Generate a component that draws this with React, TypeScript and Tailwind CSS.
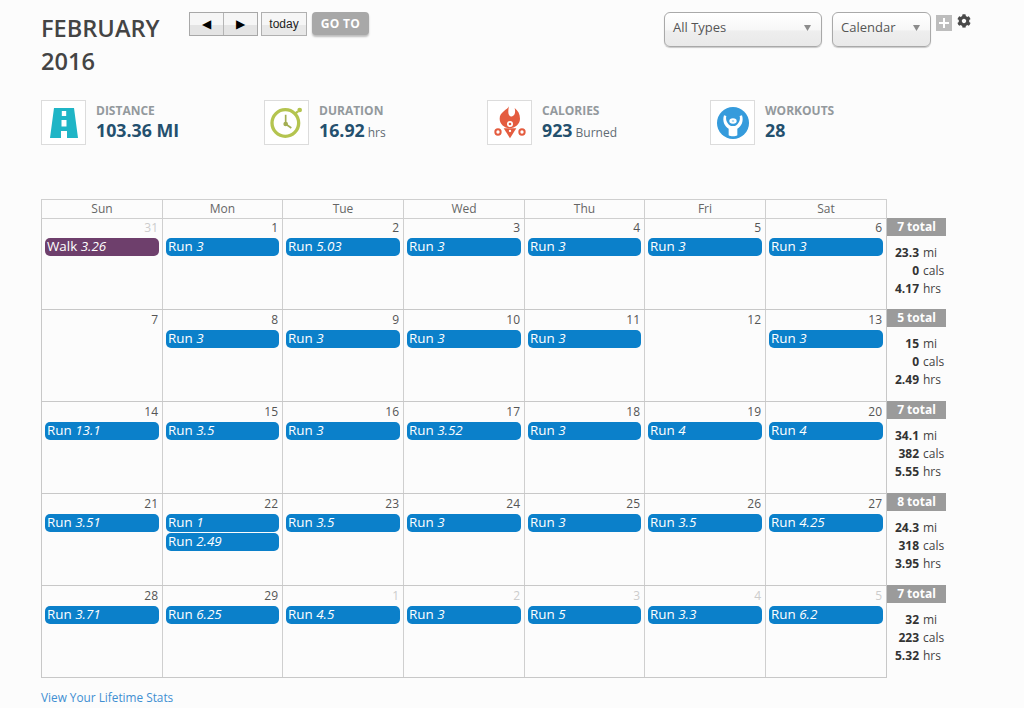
import React from "react";
import { FaCog } from "react-icons/fa";

type Ev = { t: string; v: string };
type Day = { n: number; muted?: boolean; ev: Ev[] };
const r = (v: string): Ev => ({ t: "Run", v });

const weeks: { days: Day[]; total: string; s: [string, string, string] }[] = [
  {
    days: [
      { n: 31, muted: true, ev: [{ t: "Walk", v: "3.26" }] },
      { n: 1, ev: [r("3")] },
      { n: 2, ev: [r("5.03")] },
      { n: 3, ev: [r("3")] },
      { n: 4, ev: [r("3")] },
      { n: 5, ev: [r("3")] },
      { n: 6, ev: [r("3")] },
    ],
    total: "7 total",
    s: ["23.3", "0", "4.17"],
  },
  {
    days: [
      { n: 7, ev: [] },
      { n: 8, ev: [r("3")] },
      { n: 9, ev: [r("3")] },
      { n: 10, ev: [r("3")] },
      { n: 11, ev: [r("3")] },
      { n: 12, ev: [] },
      { n: 13, ev: [r("3")] },
    ],
    total: "5 total",
    s: ["15", "0", "2.49"],
  },
  {
    days: [
      { n: 14, ev: [r("13.1")] },
      { n: 15, ev: [r("3.5")] },
      { n: 16, ev: [r("3")] },
      { n: 17, ev: [r("3.52")] },
      { n: 18, ev: [r("3")] },
      { n: 19, ev: [r("4")] },
      { n: 20, ev: [r("4")] },
    ],
    total: "7 total",
    s: ["34.1", "382", "5.55"],
  },
  {
    days: [
      { n: 21, ev: [r("3.51")] },
      { n: 22, ev: [r("1"), r("2.49")] },
      { n: 23, ev: [r("3.5")] },
      { n: 24, ev: [r("3")] },
      { n: 25, ev: [r("3")] },
      { n: 26, ev: [r("3.5")] },
      { n: 27, ev: [r("4.25")] },
    ],
    total: "8 total",
    s: ["24.3", "318", "3.95"],
  },
  {
    days: [
      { n: 28, ev: [r("3.71")] },
      { n: 29, ev: [r("6.25")] },
      { n: 1, muted: true, ev: [r("4.5")] },
      { n: 2, muted: true, ev: [r("3")] },
      { n: 3, muted: true, ev: [r("5")] },
      { n: 4, muted: true, ev: [r("3.3")] },
      { n: 5, muted: true, ev: [r("6.2")] },
    ],
    total: "7 total",
    s: ["32", "223", "5.32"],
  },
];

const RoadIcon = () => (
  <svg width="28" height="30" viewBox="0 0 28 30">
    <path d="M4 0H24L28 30H17V23H11V30H0Z" fill="#1fb5c6" />
    <rect x="11.800" y="3" width="4.400" height="5" fill="#fff" />
    <rect x="11.500" y="12" width="5" height="6.500" fill="#fff" />
  </svg>
);

const ClockIcon = () => (
  <svg width="34" height="34" viewBox="24 24 102 102">
    <circle cx="70" cy="75" r="40" fill="none" stroke="#b4c44f" strokeWidth="10" />
    <circle cx="113" cy="36" r="7" fill="#b4c44f" />
    <path d="M98 48L108 40" stroke="#b4c44f" strokeWidth="7" />
    <path d="M71 50V78L88 90" fill="none" stroke="#a3ae52" strokeWidth="5" />
    <circle cx="71" cy="78" r="7" fill="#a3ae52" />
  </svg>
);

const FlameIcon = () => (
  <svg width="34" height="34" viewBox="22 24 102 102">
    <path
      d="M70 25C66 35 42 42 42 62C42 78 56 90 72 90C88 90 103 78 103 62C103 48 97 38 87 30C90 42 88 52 80 55C72 58 64 50 70 25Z"
      fill="#e45c3f"
    />
    <circle cx="73" cy="78" r="9" fill="#fff" />
    <circle cx="73" cy="78" r="4" fill="#e45c3f" />
    <path d="M54 91H92L73 121Z" fill="#e45c3f" />
    <circle cx="73" cy="99" r="3.500" fill="#fff" />
    <circle cx="37" cy="102" r="8" fill="none" stroke="#e45c3f" strokeWidth="6" />
    <circle cx="109" cy="102" r="8" fill="none" stroke="#e45c3f" strokeWidth="6" />
  </svg>
);

const PersonIcon = () => (
  <svg width="32" height="32" viewBox="25 25 96 96">
    <circle cx="73" cy="73" r="48" fill="#359bdc" />
    <path
      d="M46 50C40 68 48 84 60 90L60 110C66 114 80 114 86 110L86 90C98 84 106 68 100 50L93 52C96 65 90 76 79 82L67 82C56 76 50 65 53 52Z"
      fill="#fff"
    />
    <ellipse cx="73" cy="67" rx="11" ry="8" fill="#fff" />
    <ellipse cx="73" cy="67" rx="4" ry="3" fill="#a9d6f2" />
  </svg>
);

const Stat = ({
  icon,
  label,
  value,
  unit,
}: {
  icon: React.ReactNode;
  label: string;
  value: string;
  unit?: string;
}) => (
  <div className="flex w-[223px] items-start">
    <div className="flex h-[45px] w-[45px] items-center justify-center border border-[#dcdcdc] bg-white">{icon}</div>
    <div className="ml-[10px] pt-[2px]">
      <div className="text-[12px] font-bold leading-[17px] text-[#93999d]">{label}</div>
      <div className="leading-[22px] text-[#24506e]">
        <span className="text-[17.8px] font-bold">{value}</span>
        {unit ? <span className="ml-[3px] text-[12px] text-[#5f6b73]">{unit}</span> : null}
      </div>
    </div>
  </div>
);

const Select = ({ label, cls }: { label: string; cls: string }) => (
  <div
    className={
      "flex h-[35px] items-center justify-between rounded-[6px] border border-[#a9a9a9] bg-[linear-gradient(#ffffff,#f7f7f7_50%,#eeeeee_55%,#e9e9e9)] pb-[3px] pl-[8px] pr-[10px] text-[13px] text-[#555] shadow-[0_1px_1px_rgba(0,0,0,0.2)] " +
      cls
    }
  >
    <span>{label}</span>
    <svg width="7" height="6" viewBox="0 0 7 6">
      <path d="M0 0H7L3.500 6Z" fill="#8c8c8c" />
    </svg>
  </div>
);

export default function App() {
  return (
    <div className="h-[708px] w-[1024px] overflow-hidden bg-[#fcfcfc] pl-[41px] font-['Open_Sans',sans-serif]">
      <div className="flex h-[100px] items-start pt-[12px]">
        <div className="w-[148px] text-[23.6px] font-semibold leading-[33px] text-[#444]">
          FEBRUARY
          <br />
          2016
        </div>
        <div className="flex items-start">
          <div className="flex h-[24px] w-[69px] border border-[#a8a8a8] font-['DejaVu_Sans',sans-serif] text-[12px] text-black">
            <div className="flex flex-1 items-center justify-center border-r border-[#b5b5b5] bg-[linear-gradient(#f6f6f6,#f6f6f6_55%,#e4e4e4_55%,#e4e4e4)]">◀</div>
            <div className="flex flex-1 items-center justify-center bg-[linear-gradient(#f6f6f6,#f6f6f6_55%,#e4e4e4_55%,#e4e4e4)]">▶</div>
          </div>
          <div className="ml-[3px] flex h-[24px] w-[46px] items-center justify-center border border-[#b0b0b0] bg-[linear-gradient(#f6f6f6,#f6f6f6_55%,#e8e8e8_55%,#e8e8e8)] font-['Liberation_Sans',sans-serif] text-[12px] text-[#222]">
            today
          </div>
          <div className="ml-[5px] flex h-[23px] w-[57px] items-center justify-center rounded-[4px] bg-[#a8a8a8] text-[12px] font-bold tracking-[0.3px] text-white shadow-[0_2px_2px_rgba(0,0,0,0.25)]">
            GO TO
          </div>
        </div>
        <div className="ml-[295px] flex items-start">
          <Select label="All Types" cls="w-[158px]" />
          <Select label="Calendar" cls="ml-[10px] w-[99px]" />
          <div className="ml-[5px] mt-[3px] flex h-[16px] w-[16px] items-center justify-center bg-[#bdbdbd]">
            <svg width="10" height="10" viewBox="0 0 10 10">
              <path d="M4 0H6V4H10V6H6V10H4V6H0V4H4Z" fill="#fff" />
            </svg>
          </div>
          <div className="ml-[5px] mt-[2px] text-[14px] text-[#4a4a4a]">
            <FaCog />
          </div>
        </div>
      </div>

      <div className="flex h-[99px] items-start">
        <Stat icon={<RoadIcon />} label="DISTANCE" value="103.36 MI" />
        <Stat icon={<ClockIcon />} label="DURATION" value="16.92" unit="hrs" />
        <Stat icon={<FlameIcon />} label="CALORIES" value="923" unit="Burned" />
        <Stat icon={<PersonIcon />} label="WORKOUTS" value="28" />
      </div>

      <div className="w-[905px]">
        <div className="grid h-[20px] w-[846px] grid-cols-[120px_120px_121px_121px_120px_121px_121px] border border-[#cfcfcf]">
          {["Sun", "Mon", "Tue", "Wed", "Thu", "Fri", "Sat"].map((d, i) => (
            <div
              key={d}
              className={"text-center text-[12px] leading-[18px] text-[#666] " + (i > 0 ? "border-l border-[#cfcfcf]" : "")}
            >
              {d}
            </div>
          ))}
        </div>
        {weeks.map((w, wi) => (
          <div key={wi} className={"flex " + (wi === 0 ? "h-[91px]" : "h-[92px]")}>
            <div className="grid w-[846px] grid-cols-[120px_120px_121px_121px_120px_121px_121px] border-x border-b border-[#c8c8c8]">
              {w.days.map((d, i) => (
                <div key={i} className={"px-[3px] " + (i > 0 ? "border-l border-[#cfcfcf]" : "")}>
                  <div
                    className={
                      "pr-[1px] text-right text-[12px] " +
                      (wi === 0 ? "h-[19px] leading-[17px] " : "h-[20px] leading-[19px] ") +
                      (d.muted ? "text-[#cccccc]" : "text-[#555]")
                    }
                  >
                    {d.n}
                  </div>
                  <div className="flex flex-col gap-[1px]">
                    {d.ev.map((e, j) => (
                      <div
                        key={j}
                        className={
                          "h-[18px] rounded-[5px] pl-[2px] text-[13.4px] leading-[17px] text-white " +
                          (e.t === "Walk" ? "bg-[#6e3f6c]" : "bg-[#0b80ca]")
                        }
                      >
                        {e.t} <i>{e.v}</i>
                      </div>
                    ))}
                  </div>
                </div>
              ))}
            </div>
            <div className="-mt-px w-[59px] text-[12px] text-[#444]">
              <div className="h-[18px] bg-[#9b9b9b] text-center font-bold leading-[18px] text-white">{w.total}</div>
              <div className="pt-[8px] leading-[18px]">
                {w.s.map((v, k) => (
                  <div key={k} className="flex">
                    <span className="w-[32px] text-right font-bold text-[#333]">{v}</span>
                    <span className="ml-[4px]">{["mi", "cals", "hrs"][k]}</span>
                  </div>
                ))}
              </div>
            </div>
          </div>
        ))}
      </div>

      <div className="pt-[11px] text-[11.8px] leading-[17px] text-[#3f8fd2]">View Your Lifetime Stats</div>
    </div>
  );
}
